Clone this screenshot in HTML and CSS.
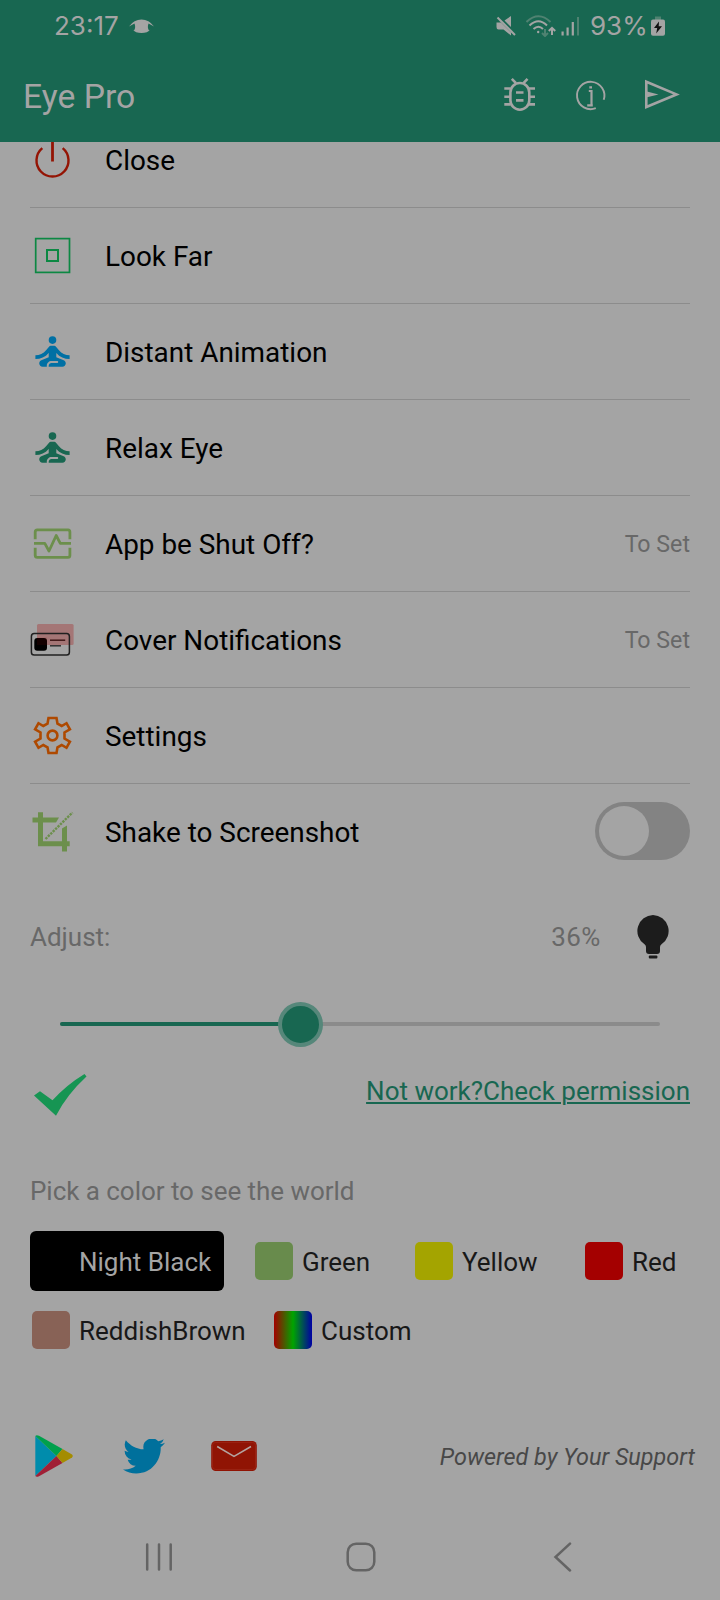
FILE: index.html
```html
<!DOCTYPE html>
<html lang="en">
<head>
	<meta charset="utf-8">
	<title>Eye Pro</title>
	<link rel="stylesheet" href="styles.css">
</head>
<body>
	<header class="header">
		<div class="status">
			<span class="clock">23:17</span>
			<svg class="status-eye" width="25" height="22" viewBox="0 0 25 22"><path d="M0 11.500Q5 4.500 12.500 4.500T25 11.500L19.500 8.500Q18 12.500 20 15.500L21.500 14.500Q18.500 18 12.500 18T3.500 14.500L5 15.500Q7 12.500 5.500 8.500Z" fill="#a4a4a4"/></svg>
			<div class="status-right">
				<svg width="20" height="22" viewBox="0 0 20 22"><path d="M0.500 7.500H5L15 17.500V20.500L7.500 14.500H2.500Q0.500 14.500 0.500 12ZM8.500 5.500L15 1V12Z" fill="#a4a4a4"/><path d="M1.500 2.500L19 20" stroke="#a4a4a4" stroke-width="2"/></svg>
				<svg class="wifi" width="30" height="22" viewBox="0 0 30 22" fill="none" stroke="#a4a4a4" stroke-width="2">
					<path d="M0.500 7Q12.500 -4.500 24.500 7" stroke="#4f8271"/>
					<path d="M3.500 10.500Q12.500 2 21 10.500M7.500 14Q12.500 9.500 17 14"/>
					<circle cx="12.200" cy="17" r="1.200" fill="#a4a4a4" stroke="none"/>
					<path d="M19 14V21M16 18L19 21L22 18" stroke="#4f8271"/>
					<path d="M26 20V13M22.800 16L26 12.800L29.200 16"/>
				</svg>
				<svg class="signal" width="19" height="22" viewBox="0 0 19 22"><path d="M0.500 16.500H2.700V20.500H0.500ZM5.500 12.500H7.700V20.500H5.500ZM10.700 7H12.900V20.500H10.700Z" fill="#a4a4a4"/><path d="M16 2H18V20.500H16Z" fill="#4f8271"/></svg>
				<span class="battery-level">93%</span>
				<svg width="14" height="22" viewBox="0 0 14 22"><rect x="4" y="1.500" width="6" height="4" fill="#4f8271"/><rect y="4.500" width="14" height="16.200" rx="2" fill="#a4a4a4"/><path d="M8 6.500L3 13H6.200L5.200 18.500L11 11.200H7.700Z" fill="#111"/></svg>
			</div>
		</div>
		<div class="toolbar">
			<h1 class="title">Eye Pro</h1>
			<div class="actions">
				<svg width="40" height="40" viewBox="0 0 40 40" fill="none" stroke="#a4a4a4" stroke-width="2.600">
					<rect x="10.400" y="6" width="18.900" height="26.700" rx="9.400"/>
					<path d="M4.300 11.500H10.500M4.300 19.700H10.500M4.300 27.400H10.500M29 11.500H35M29 19.700H35M29 27.400H35M11.800 1.800L16 6.200M27.500 1.800L23.500 6.200M16 15.500H23.500M16 23.400H23.500"/>
				</svg>
				<svg width="40" height="40" viewBox="0 0 40 40" fill="none" stroke="#a4a4a4" stroke-width="1.900">
					<path d="M33.700 22.800A13.700 13.700 0 1 0 25.800 31.200"/>
					<path d="M18.800 14H21.500V28.300M17.200 28.300H22.800M19.300 10.300H22" stroke-width="2.200"/>
				</svg>
				<svg width="40" height="40" viewBox="0 0 40 40"><path d="M6.300 4.800L36.500 17.400L6.300 30Z" fill="none" stroke="#a4a4a4" stroke-width="2.600"/><path d="M7 14.500L18.500 17.400L7 20.300Z" fill="#a4a4a4"/></svg>
			</div>
		</div>
	</header>

	<ul class="menu">
		<li class="row">
			<svg class="icon" viewBox="0 0 48 47" fill="none" stroke="#941404"><path d="M12.300 12.200A16 16 0 1 0 32.700 12.200" stroke-width="2.400"/><path d="M22.500 3V25.500" stroke-width="2.800"/></svg>
			<span class="label">Close</span>
		</li>
		<li class="row">
			<svg class="icon" viewBox="0 0 48 47" fill="none" stroke="#0c8843"><rect x="5.700" y="6.600" width="33.800" height="33.800" stroke-width="1.700"/><rect x="17" y="18" width="11" height="11" stroke-width="2"/></svg>
			<span class="label">Look Far</span>
		</li>
		<li class="row">
			<svg class="icon" viewBox="0 0 48 47" fill="#0070a4"><g transform="translate(-.3 .7) scale(1.9)"><circle cx="12" cy="6" r="2"/><path d="M21 16v-2c-2.240 0-4.160-.96-5.600-2.680l-1.340-1.600C13.680 9.260 13.120 9 12.530 9h-1.050c-.6 0-1.150.26-1.530.72l-1.340 1.600C7.160 13.040 5.240 14 3 14v2c2.770 0 5.190-1.170 7-3.250V15l-3.880 1.550C5.450 16.820 5 17.480 5 18.210 5 19.200 5.800 20 6.790 20H9v-.5c0-1.380 1.120-2.500 2.500-2.500h3c.28 0 .5.22.5.5s-.22.5-.5.5h-3c-.83 0-1.500.67-1.500 1.500v.5h7.210C18.200 20 19 19.200 19 18.210c0-.73-.45-1.390-1.120-1.660L14 15v-2.250C15.810 14.830 18.230 16 21 16z"/></g></svg>
			<span class="label">Distant Animation</span>
		</li>
		<li class="row">
			<svg class="icon" viewBox="0 0 48 47" fill="#186751"><g transform="translate(-.3 .7) scale(1.9)"><circle cx="12" cy="6" r="2"/><path d="M21 16v-2c-2.240 0-4.160-.96-5.600-2.680l-1.340-1.600C13.680 9.260 13.120 9 12.530 9h-1.050c-.6 0-1.150.26-1.530.72l-1.340 1.600C7.160 13.040 5.240 14 3 14v2c2.770 0 5.190-1.170 7-3.250V15l-3.880 1.550C5.450 16.820 5 17.480 5 18.210 5 19.200 5.800 20 6.790 20H9v-.5c0-1.380 1.120-2.500 2.500-2.500h3c.28 0 .5.22.5.5s-.22.5-.5.5h-3c-.83 0-1.500.67-1.500 1.500v.5h7.210C18.200 20 19 19.200 19 18.210c0-.73-.45-1.390-1.120-1.660L14 15v-2.250C15.810 14.830 18.230 16 21 16z"/></g></svg>
			<span class="label">Relax Eye</span>
		</li>
		<li class="row">
			<svg class="icon" viewBox="0 0 48 47" fill="none" stroke="#6c8f4c" stroke-width="2.800"><path d="M5.200 19.200V12Q5.200 9.900 7.300 9.900H38Q39.900 9.900 39.900 12V19.200M5.200 27.800V35.200Q5.200 37.300 7.300 37.300H38Q39.900 37.300 39.900 35.200V27.800"/><path d="M4 23.400H14.800L19 31L26.200 15.500L30.300 23.400H41" stroke-linejoin="round"/></svg>
			<span class="label">App be Shut Off?</span>
			<span class="to-set">To Set</span>
		</li>
		<li class="row">
			<svg class="icon" viewBox="0 0 48 47"><rect x="7" y="8" width="36.600" height="21" rx="1.500" fill="#a47676"/><rect x="1.400" y="17.600" width="38" height="21.500" rx="2.800" fill="none" stroke="#202020" stroke-width="1.500"/><rect x="4.300" y="21.900" width="12.700" height="12.800" rx="3" fill="#000"/><path d="M20 24.200H35.200" stroke="#401818" stroke-width="1.500"/><path d="M20 29.800H31" stroke="#303030" stroke-width="1.500"/><path d="M7 21.500H17V29H7Z" fill="#a00000" opacity=".12"/></svg>
			<span class="label">Cover Notifications</span>
			<span class="to-set">To Set</span>
		</li>
		<li class="row">
			<svg class="icon" viewBox="0 0 48 47" fill="none" stroke="#ae4900" stroke-width="2.600"><g transform="translate(22.500 23.500)"><path d="M-4 -17.500H4L5 -11.800L9.200 -9.500L14 -12.300L17.400 -6.200L12 -3V3L17.400 6.200L14 12.300L9.200 9.500L5 11.800L4 17.500H-4L-5 11.800L-9.200 9.500L-14 12.300L-17.400 6.200L-12 3V-3L-17.400 -6.200L-14 -12.300L-9.200 -9.500L-5 -11.800Z"/><circle r="4.900"/></g></svg>
			<span class="label">Settings</span>
		</li>
		<li class="row">
			<svg class="icon" viewBox="0 0 48 47" fill="#6c8f4c"><path d="M8 3.200H13V8.500H29L26 13.500H13V32.300H39.700V37.200H8ZM2.500 8.500H8V13.500H2.500ZM37 16.500V42.500H32V19.500Z"/><path d="M15.500 30L42.500 3.500" fill="none" stroke="#6c8f4c" stroke-width="2.400" stroke-dasharray="2.400 1"/></svg>
			<span class="label">Shake to Screenshot</span>
			<span class="toggle"><span class="toggle-thumb"></span></span>
		</li>
	</ul>

	<div class="adjust">
		<span>Adjust:</span>
		<span class="adjust-value">36%</span>
		<svg width="34" height="46" viewBox="0 0 34 46" fill="#1c1c1c"><path d="M17 1A16 16 0 0 1 25.500 30.300Q24 31.500 24 33V37Q24 40 21 40H13Q10 40 10 37V33Q10 31.500 8.500 30.300A16 16 0 0 1 17 1Z"/><rect x="12.800" y="41.500" width="8.600" height="3" rx="1"/></svg>
	</div>
	<div class="slider">
		<div class="slider-track"><div class="slider-fill" style="width:40%"></div></div>
		<div class="slider-thumb" style="left:40%"></div>
	</div>
	<div class="permission">
		<svg width="54" height="44" viewBox="0 0 54 44"><path d="M0 21.500L6 17.300L18.500 26.300Q33 10.500 50.500 0L52.500 2.600Q33 20.500 22 41.700Z" fill="#169553"/></svg>
		<a class="permission-link" href="#">Not work?Check permission</a>
	</div>

	<p class="pick">Pick a color to see the world</p>
	<div class="colors">
		<div class="chip chip-black selected"><span class="swatch black"></span>Night Black</div>
		<div class="chip chip-green"><span class="swatch green"></span>Green</div>
		<div class="chip chip-yellow"><span class="swatch yellow"></span>Yellow</div>
		<div class="chip"><span class="swatch red"></span>Red</div>
	</div>
	<div class="colors">
		<div class="chip chip-brown"><span class="swatch brown"></span>ReddishBrown</div>
		<div class="chip"><span class="swatch custom"></span>Custom</div>
	</div>

	<footer class="footer">
		<svg width="38" height="42" viewBox="0 0 38 42"><path d="M0.300 1V41L21.500 21Z" fill="#008cac"/><path d="M0.300 1Q1.500 -.5 4 .8L27.500 14L21.500 21Z" fill="#00a04c"/><path d="M0.300 41Q1.500 42.500 4 41.200L27.500 28L21.500 21Z" fill="#a02036"/><path d="M27.500 14L37 19.500Q38.500 21 37 22.500L27.500 28L21.500 21Z" fill="#a48c00"/></svg>
		<svg class="twitter" width="42" height="35" viewBox="0 2.500 24 19.600" preserveAspectRatio="none"><path fill="#00709c" d="M23.953 4.570a10 10 0 01-2.825.775 4.958 4.958 0 002.163-2.723c-.951.555-2.005.959-3.127 1.184a4.920 4.920 0 00-8.384 4.482C7.690 8.095 4.067 6.130 1.640 3.162a4.822 4.822 0 00-.666 2.475c0 1.710.87 3.213 2.188 4.096a4.904 4.904 0 01-2.228-.616v.06a4.923 4.923 0 003.946 4.827 4.996 4.996 0 01-2.212.085 4.936 4.936 0 004.604 3.417 9.867 9.867 0 01-6.102 2.105c-.39 0-.779-.023-1.170-.067a13.995 13.995 0 007.557 2.209c9.053 0 13.998-7.496 13.998-13.985 0-.21 0-.42-.015-.63A9.935 9.935 0 0024 4.590z"/></svg>
		<svg class="mail" width="46" height="30" viewBox="0 0 46 30"><rect x=".2" width="45.600" height="30" rx="4.500" fill="#901404"/><rect x="1.500" y="1.500" width="43" height="27" rx="3" fill="none" stroke="#a02c1c" stroke-width=".6"/><path d="M6.200 5.500L23 15.500L40 5.500" fill="none" stroke="#b4a4a0" stroke-width="1.500"/></svg>
		<span class="powered">Powered by Your Support</span>
	</footer>

	<nav class="nav">
		<svg width="30" height="30" viewBox="0 0 30 30" stroke="#646464" stroke-width="2.500" stroke-linecap="round"><path d="M3.200 2.500V27.500M15 2.500V27.500M26.700 2.500V27.500"/></svg>
		<svg width="30" height="30" viewBox="0 0 30 30"><rect x="1.700" y="1.700" width="26.600" height="26.600" rx="8.500" fill="none" stroke="#646464" stroke-width="2.500"/></svg>
		<svg width="30" height="30" viewBox="0 0 30 30"><path d="M22 1.700L7.500 15L22 28.500" fill="none" stroke="#646464" stroke-width="2.500" stroke-linecap="round"/></svg>
	</nav>
</body>
</html>
```
FILE: styles.css
```css
* {
	box-sizing: border-box;
}
body {
	margin: 0;
	width: 720px;
	height: 1600px;
	overflow: hidden;
	background: #a4a4a4;
	color: #000;
	font-family: Roboto, sans-serif;
	font-size: 26px;
}
svg {
	display: block;
	flex: none;
}

.header {
	position: relative;
	z-index: 1;
	height: 142px;
	background: #186751;
	color: #a4a4a4;
}
.status {
	display: flex;
	align-items: center;
	height: 52px;
	padding: 0 55px 0 54px;
	font-family: Inter, sans-serif;
	line-height: 30px;
}
.clock {
	width: 75px;
}
.status-right {
	display: flex;
	align-items: center;
	margin-left: auto;
}
.wifi {
	margin-left: 10px;
}
.signal {
	margin-left: 5px;
}
.battery-level {
	width: 61px;
	margin-left: 10px;
}
.toolbar {
	display: flex;
	align-items: center;
	justify-content: space-between;
	height: 90px;
	padding: 0 40px 0 23px;
}
.title {
	margin: 0;
	padding-bottom: 2px;
	font-size: 33.700px;
	font-weight: 400;
}
.actions {
	display: flex;
	gap: 30px;
}

/* first row is scrolled half under the header */
.menu {
	margin: -30px 30px 0;
	padding: 0;
	list-style: none;
}
.row {
	display: flex;
	align-items: center;
	height: 96px;
	border-bottom: 1px solid #8c8c8c;
}
.row:last-child {
	border-bottom: 0;
}
.icon {
	width: 48px;
	height: 47px;
}
.label {
	margin-left: 27px;
	padding-top: 1px;
	font-size: 27.900px;
}
.to-set {
	margin-left: auto;
	padding-top: 1px;
	font-size: 23.200px;
	color: #686868;
}
.toggle {
	width: 95px;
	height: 58px;
	margin: 0 0 2px auto;
	padding: 4px;
	border-radius: 29px;
	background: #838383;
}
.toggle-thumb {
	display: block;
	width: 50px;
	height: 50px;
	border-radius: 50%;
	background: #a4a4a4;
}

.adjust {
	display: flex;
	align-items: center;
	height: 114px;
	padding: 0 50.5px 0 30px;
	color: #686868;
}
.adjust-value {
	margin: 0 35px 0 auto;
	letter-spacing: .3px;
}
.slider {
	position: relative;
	margin: 0 60px;
	padding: 28px 0;
}
.slider-track {
	height: 4px;
	border-radius: 2px;
	background: #8b8b8b;
}
.slider-fill {
	height: 4px;
	border-radius: 2px;
	background: #186751;
}
.slider-thumb {
	position: absolute;
	top: 8px;
	width: 45px;
	height: 45px;
	margin-left: -22px;
	border: 4.5px solid #56877a;
	border-radius: 50%;
	background: #186751;
}
.permission {
	display: flex;
	align-items: center;
	justify-content: space-between;
	height: 76px;
	padding: 0 30px 0 34px;
}
.permission svg {
	margin-top: 7px;
}
.permission-link {
	padding-bottom: 2px;
	color: #186751;
	text-underline-offset: 2px;
	text-decoration-thickness: 1.500px;
}

.pick {
	display: flex;
	align-items: center;
	height: 121px;
	margin: 0 30px -20px;
	color: #686868;
	letter-spacing: -.04px;
}
.colors {
	display: flex;
	margin: 0 0 9px 30px;
}
.chip {
	display: flex;
	align-items: center;
	height: 60px;
	padding-left: 2px;
	border-radius: 6px;
	color: #181818;
	line-height: 32px;
	white-space: nowrap;
}
/* labels sit a touch below the middle of the swatch */
.chip {
	padding-top: 2px;
}
.chip-black {
	width: 194px;
	margin-right: 29px;
}
.chip-green {
	width: 160px;
}
.chip-yellow {
	width: 170px;
}
.chip-brown {
	width: 242px;
}
.selected {
	background: #000;
	color: #a4a4a4;
}
.swatch {
	width: 38px;
	height: 38px;
	margin: -2px 9px 0 0;
	border-radius: 5px;
}
.green {
	background: #688b4c;
}
.yellow {
	background: #a4a400;
}
.red {
	background: #a40000;
}
.brown {
	background: #886256;
}
.custom {
	background: linear-gradient(90deg, #a40000, #00a400 50%, #0000a4);
}

.footer {
	display: flex;
	align-items: center;
	height: 42px;
	margin: 75px 25px 0 35px;
}
.twitter {
	margin-left: 50px;
}
.mail {
	margin-left: 46px;
}
.powered {
	margin-left: auto;
	padding-top: 2px;
	font-size: 23.400px;
	font-style: italic;
	color: #484848;
}
.nav {
	display: flex;
	justify-content: space-between;
	margin: 65px 142px 0 144px;
}
```
